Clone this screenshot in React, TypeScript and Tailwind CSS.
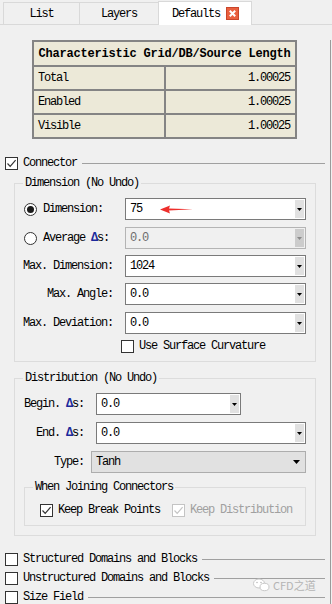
import React from "react";

const font = { fontFamily: '"Liberation Mono", "Noto Sans CJK SC", monospace' };

function Check({ checked = false, disabled = false }: { checked?: boolean; disabled?: boolean }) {
  const c = disabled ? "#c4c4c4" : "#333333";
  return (
    <span
      className={`w-[13px] h-[13px] shrink-0 border bg-white flex items-center justify-center ${
        disabled ? "border-[#c4c4c4]" : "border-[#333333]"
      }`}
    >
      {checked && (
        <svg width="11" height="11" viewBox="0 0 11 11">
          <path d="M1.5 5.5 L4.2 8.3 L9.6 2.2" fill="none" stroke={c} strokeWidth="1.2" />
        </svg>
      )}
    </span>
  );
}

function Radio({ on = false }: { on?: boolean }) {
  return (
    <span className="w-[13px] h-[13px] shrink-0 rounded-full border border-[#333333] bg-white flex items-center justify-center">
      {on && <span className="w-[7px] h-[7px] rounded-full bg-[#1a1a1a]" />}
    </span>
  );
}

function Combo({
  value,
  width,
  disabled = false,
  children,
}: {
  value: string;
  width: string;
  disabled?: boolean;
  children?: React.ReactNode;
}) {
  return (
    <div
      className={`relative h-[22px] flex items-center border ${width} ${
        disabled ? "bg-[#f0f0f0] border-[#b4b4b4] text-[#6d6d6d]" : "bg-white border-[#7a7a7a] text-black"
      }`}
    >
      <span className="pl-[4px] flex-1">{value}</span>
      <span
        className={`w-[9px] h-[18px] mr-[1px] flex items-center justify-center ${
          disabled ? "bg-[#cccccc]" : "bg-[#e1e1e1]"
        }`}
      >
        <svg width="5" height="3" viewBox="0 0 5 3">
          <path d="M0 0 H5 L2.5 3 Z" fill={disabled ? "#8a8a8a" : "#000"} />
        </svg>
      </span>
      {children}
    </div>
  );
}

function Delta() {
  return <span className="font-bold text-[#1b2a9c]">Δ</span>;
}

function SectionRow({ label, checked = false, mt }: { label: string; checked?: boolean; mt: string }) {
  return (
    <div className={`flex items-center h-[14px] ${mt}`}>
      <Check checked={checked} />
      <span className="ml-[5px] whitespace-nowrap">{label}</span>
      <span className="flex-1 ml-[5px] h-px bg-[#a0a0a0]" />
    </div>
  );
}

export default function App() {
  const rows = [
    ["Total", "1.00025"],
    ["Enabled", "1.00025"],
    ["Visible", "1.00025"],
  ];

  return (
    <div
      className="relative w-[332px] h-[604px] bg-[#f0f0f0] overflow-hidden text-[12px] leading-[14px] tracking-[-1.2px] text-black"
      style={font}
    >
      {/* tabs */}
      <div className="h-[25px] flex items-end pl-[3px] border-b border-[#d9d9d9]">
        <div className="w-[76px] h-[22px] border-l border-t border-[#d9d9d9] flex items-center justify-center">List</div>
        <div className="w-[79px] h-[22px] border-l border-t border-[#d9d9d9] flex items-center justify-center">Layers</div>
        <div className="w-[94px] h-[24px] -mb-px bg-white border-l border-t border-r border-[#d9d9d9] flex items-center pl-[13px] gap-[6px]">
          <span>Defaults</span>
          <svg width="13" height="13" viewBox="0 0 13 13">
            <rect x="0.5" y="0.5" width="12" height="12" fill="#e9603f" stroke="#c9452a" />
            <path d="M3.8 3.8 L9.2 9.2 M9.2 3.8 L3.8 9.2" stroke="#fff" strokeWidth="2" />
          </svg>
        </div>
      </div>

      {/* pane */}
      <div className="w-[331px] h-[579px] border-r border-[#9a9a9a]">
        {/* table */}
        <div className="ml-[32px] mt-[15px] w-[265px] grid grid-cols-[130px_129px] gap-[2px] p-[2px] bg-[#848484]">
          <div className="col-span-2 h-[23px] bg-[#ece9d8] flex items-center justify-center font-bold tracking-[-0.2px]">
            Characteristic Grid/DB/Source Length
          </div>
          {rows.map(([k, v]) => (
            <React.Fragment key={k}>
              <div className="h-[22px] bg-[#ece9d8] flex items-center pl-[4px]">{k}</div>
              <div className="h-[22px] bg-[#ece9d8] flex items-center justify-end pr-[5px]">{v}</div>
            </React.Fragment>
          ))}
        </div>

        <div className="pl-[5px] pr-[5px]">
          <SectionRow label="Connector" checked mt="mt-[17px]" />
        </div>

        {/* Dimension group */}
        <fieldset className="ml-[14px] mt-[6px] w-[302px] border border-[#dcdcdc] pt-[8px] pb-[8px]">
          <legend className="ml-[8px] px-[2px] leading-[14px]">Dimension (No Undo)</legend>

          <div className="flex items-center">
            <div className="w-[110px] flex items-center pl-[9px]">
              <Radio on />
              <span className="ml-[6px]">Dimension:</span>
            </div>
            <Combo value="75" width="w-[181px]">
              <svg className="absolute left-[34px] top-[6px]" width="34" height="9" viewBox="0 0 34 9">
                <path d="M0 4.5 L10 0.5 L9 3.4 L33 4.2 L9 5.6 L10 8.5 Z" fill="#ee2f2c" />
              </svg>
            </Combo>
          </div>

          <div className="flex items-center mt-[7px]">
            <div className="w-[110px] flex items-center pl-[9px]">
              <Radio />
              <span className="ml-[6px]">
                Average <Delta />s:
              </span>
            </div>
            <Combo value="0.0" width="w-[181px]" disabled />
          </div>

          <div className="flex items-center mt-[6px]">
            <div className="w-[110px] text-right pr-[12px]">Max. Dimension:</div>
            <Combo value="1024" width="w-[181px]" />
          </div>

          <div className="flex items-center mt-[6px]">
            <div className="w-[110px] text-right pr-[12px]">Max. Angle:</div>
            <Combo value="0.0" width="w-[181px]" />
          </div>

          <div className="flex items-center mt-[7px]">
            <div className="w-[110px] text-right pr-[12px]">Max. Deviation:</div>
            <Combo value="0.0" width="w-[181px]" />
          </div>

          <div className="flex items-center h-[14px] mt-[5px] ml-[106px]">
            <Check />
            <span className="ml-[5px]">Use Surface Curvature</span>
          </div>
        </fieldset>

        {/* Distribution group */}
        <fieldset className="ml-[14px] mt-[9px] w-[302px] border border-[#dcdcdc] pt-[8px] pb-[9px]">
          <legend className="ml-[8px] px-[2px] leading-[14px]">Distribution (No Undo)</legend>

          <div className="flex items-center">
            <div className="w-[69px] text-right">
              Begin. <Delta />s:
            </div>
            <div className="ml-[12px]">
              <Combo value="0.0" width="w-[145px]" />
            </div>
          </div>

          <div className="flex items-center mt-[7px]">
            <div className="w-[69px] text-right">
              End. <Delta />s:
            </div>
            <div className="ml-[12px]">
              <Combo value="0.0" width="w-[210px]" />
            </div>
          </div>

          <div className="flex items-center mt-[7px]">
            <div className="w-[69px] text-right">Type:</div>
            <div className="ml-[7px] w-[215px] h-[22px] bg-[#e1e1e1] border border-[#adadad] flex items-center pl-[4px] pr-[5px]">
              <span className="flex-1">Tanh</span>
              <svg width="7" height="4" viewBox="0 0 7 4">
                <path d="M0 0 H7 L3.5 4 Z" fill="#000" />
              </svg>
            </div>
          </div>

          <fieldset className="ml-[9px] mt-[7px] w-[282px] border border-[#dcdcdc] pt-[9px] pb-[8px]">
            <legend className="ml-[8px] px-[2px] leading-[14px]">When Joining Connectors</legend>
            <div className="flex items-center h-[14px] pl-[15px]">
              <Check checked />
              <span className="ml-[5px]">Keep Break Points</span>
              <span className="ml-[12px]">
                <Check checked disabled />
              </span>
              <span className="ml-[5px] text-[#a0a0a0]">Keep Distribution</span>
            </div>
          </fieldset>
        </fieldset>

        <div className="pl-[5px] pr-[5px]">
          <SectionRow label="Structured Domains and Blocks" mt="mt-[16px]" />
          <SectionRow label="Unstructured Domains and Blocks" mt="mt-[5px]" />
          <SectionRow label="Size Field" mt="mt-[5px]" />
        </div>
      </div>

      {/* watermark */}
      <div className="absolute left-[253px] top-[578px] flex items-center gap-[3px] text-[#b4b4b4] tracking-normal">
        <svg width="17" height="14" viewBox="0 0 17 14">
          <ellipse cx="6" cy="5.5" rx="5.5" ry="4.5" fill="#ffffff" stroke="#c8c8c8" />
          <ellipse cx="11.5" cy="9" rx="4.5" ry="3.7" fill="#ffffff" stroke="#c8c8c8" />
          <circle cx="4" cy="4.5" r="0.8" fill="#bdbdbd" />
          <circle cx="8" cy="4.5" r="0.8" fill="#bdbdbd" />
        </svg>
        <span className="text-[11px]" style={{ fontFamily: '"Noto Sans CJK SC", "Noto Sans", sans-serif' }}>
          CFD之道
        </span>
      </div>
    </div>
  );
}
